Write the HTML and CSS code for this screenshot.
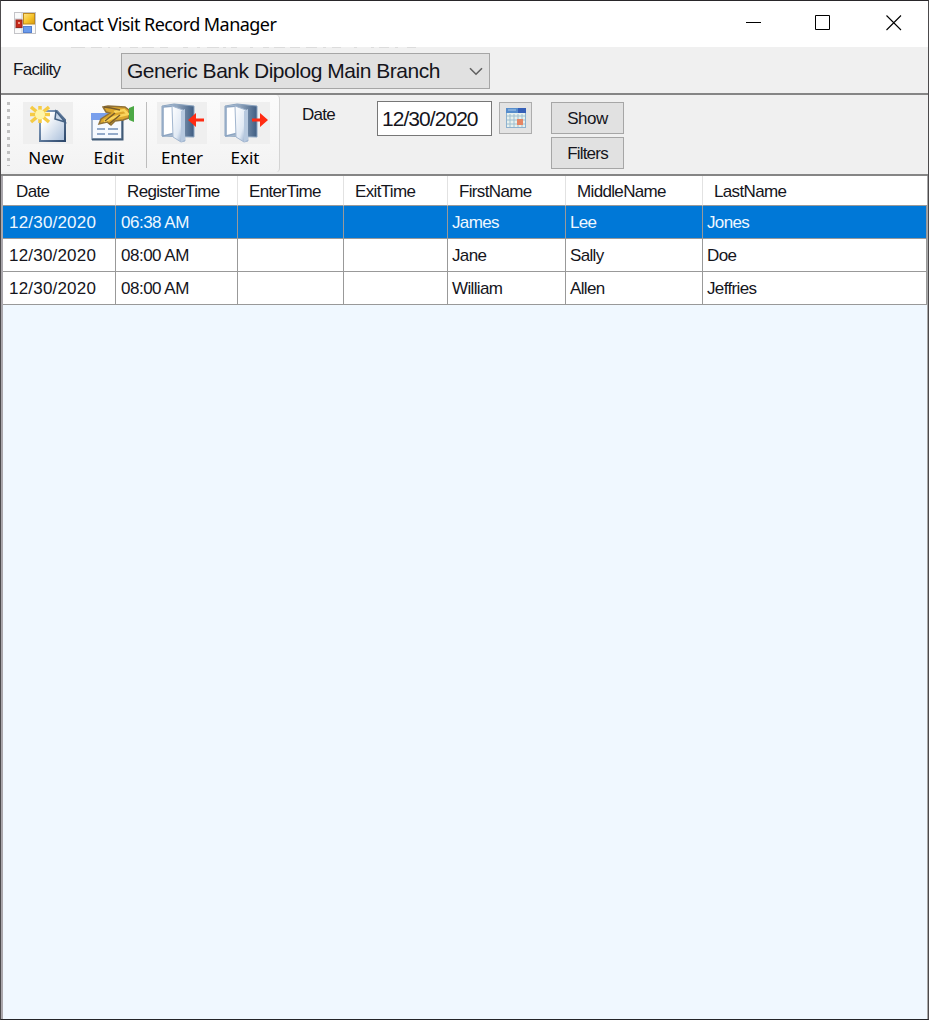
FILE: index.html
```html
<!DOCTYPE html>
<html lang="en">
<head>
<meta charset="utf-8">
<title>Contact Visit Record Manager</title>
<link rel="stylesheet" href="styles.css">
</head>
<body>
<div class="window">
  <header class="titlebar">
    <svg class="app-icon" width="22" height="22" viewBox="0 0 22 22">
      <defs><linearGradient id="gold" x2="1" y2="1"><stop stop-color="#ffe48a"/><stop offset=".5" stop-color="#f7c62f"/><stop offset="1" stop-color="#d99a08"/></linearGradient></defs>
      <rect x=".5" y=".5" width="21" height="21" fill="#fafafa" stroke="#c4c4c8"/>
      <path d="M8 1V21M1 7H8M1 16H8M17 14V21" stroke="#c9cbd0"/>
      <rect x="9.5" y="1.5" width="11" height="10.500" fill="url(#gold)" stroke="#c08a1c"/>
      <rect x="2" y="8" width="6" height="7.500" fill="#c8281a" stroke="#96271f"/>
      <path d="M4 10h2v2H4z" fill="#ef9a87"/>
      <rect x="9.500" y="14.500" width="8" height="6" fill="#6a9bec" stroke="#5580cf"/>
    </svg>
    <h1 class="title">Contact Visit Record Manager</h1>
    <svg class="win-controls" width="156" height="16" viewBox="0 0 156 16" fill="none" stroke="#000">
      <path d="M0 7.500H15M69.500 .5H83.500V14.500H69.500Z"/>
      <path d="M140.500 .5L155 15M155 .5L140.500 15" stroke-width="1.1"/>
    </svg>
  </header>

  <section class="facility">
    <svg class="shadow-marks" width="350" height="2" viewBox="0 0 350 2"><path d="M2 .5H16M22 .5H33M39 .5H41M50 .5H52M61 .5H69M73 .5H85M91 .5H99M114 .5H119M128 .5H131M138 .5H150M154 .5H157M162 .5H168M181 .5H184M194 .5H200M205 .5H216M221 .5H231M237 .5H248M254 .5H257M263 .5H272M285 .5H288M302 .5H305M310 .5H320M326 .5H329M338 .5H347" stroke="#dcdcdc"/></svg>
    <label class="label facility-label">Facility</label>
    <div class="combo">
      <span class="combo-text">Generic Bank Dipolog Main Branch</span>
      <svg width="14" height="9" viewBox="0 0 14 9"><path d="M1 1.200L7 7.200L13 1.200" fill="none" stroke="#606060" stroke-width="1.600"/></svg>
    </div>
  </section>

  <section class="toolbar">
    <div class="toolstrip">
      <i class="grip"></i>
      <button class="tool tool-new">
        <svg class="tool-icon" width="50" height="42" viewBox="0 0 50 42">
          <defs>
            <linearGradient id="page" x2="1" y2="1"><stop offset=".25" stop-color="#fff"/><stop offset="1" stop-color="#a9bfdb"/></linearGradient>
            <linearGradient id="edge" x2="1" y2="1"><stop stop-color="#8fa9c9"/><stop offset="1" stop-color="#2d486b"/></linearGradient>
          </defs>
          <path d="M18 9H34L42 18V39H17V10Z" fill="url(#page)" stroke="url(#edge)" stroke-width="2"/>
          <path d="M33 9L32 17L42 20Z" fill="#c7d6e8" stroke="#456284" stroke-width="1.500"/>
          <path d="M17 4V21M7 12.500H27M8 5L26 20M26 5L8 20" stroke="#f5cb45" stroke-width="3.500"/>
          <circle cx="17" cy="12.500" r="5" fill="#fff5a8"/>
        </svg>
        <span>New</span>
      </button>
      <button class="tool tool-edit">
        <svg class="tool-icon plain" width="50" height="42" viewBox="0 0 50 42">
          <rect x="6" y="12" width="30" height="25" fill="#f6f9fe" stroke="#a5b4c8" stroke-width="2"/>
          <path d="M6 37.500H36.500V13" fill="none" stroke="#415a76" stroke-width="2"/>
          <rect x="5" y="11" width="30" height="7" fill="#799fec"/>
          <path d="M11 27H19M22 27H32M11 32H19M22 32H32" stroke="#93aaca" stroke-width="2"/>
          <path d="M17 5L22 4L39 5L43 8V16L37 18L29 19L25 23L21 20L13 22L15 17L24 11L20 10Z" fill="#dca72d" stroke="#8f7138" stroke-width="1.500"/>
          <path d="M28 10L38 8L42 12L29 15L18 19" fill="none" stroke="#fad55d" stroke-width="2.500"/>
          <path d="M18 5L25 6L34 8M19 19L29 11M23 22L34 13" fill="none" stroke="#765b2c" stroke-width="1.500"/>
          <path d="M43 6L48 4V20L43 18Z" fill="#4ca845"/>
        </svg>
        <span>Edit</span>
      </button>
      <i class="separator"></i>
      <button class="tool tool-enter">
        <svg class="tool-icon" width="50" height="42" viewBox="0 0 50 42">
          <defs>
            <linearGradient id="back" x2="1"><stop stop-color="#dbe6f2"/><stop offset="1" stop-color="#3f5d82"/></linearGradient>
            <linearGradient id="door" x2="1" y2="1"><stop stop-color="#fff"/><stop offset=".6" stop-color="#e0e9f4"/><stop offset="1" stop-color="#7895bc"/></linearGradient>
          </defs>
          <path d="M5 4L17 2L37 4V35L5 34Z" fill="url(#back)" stroke="#8aa3bf"/>
          <path d="M6 5L18 4V31L6 34Z" fill="#fff" stroke="#8ca4c1" stroke-width="1.500"/>
          <path d="M15 4L26 8L28 39L24 40L16 35Z" fill="url(#door)" stroke="#a2b6cf"/>
          <path d="M24 9L28 7V38L24 40Z" fill="#b7c9df"/>
          <path d="M31 18L39 11V16.500H47V19.500H39V25Z" fill="#ff2b12"/>
        </svg>
        <span>Enter</span>
      </button>
      <button class="tool tool-exit">
        <svg class="tool-icon" width="50" height="42" viewBox="0 0 50 42">
          <path d="M5 4L17 2L37 4V35L5 34Z" fill="url(#back)" stroke="#8aa3bf"/>
          <path d="M6 5L18 4V31L6 34Z" fill="#fff" stroke="#8ca4c1" stroke-width="1.500"/>
          <path d="M15 4L26 8L28 39L24 40L16 35Z" fill="url(#door)" stroke="#a2b6cf"/>
          <path d="M24 9L28 7V38L24 40Z" fill="#b7c9df"/>
          <path d="M48 18L40 11V16.500H32V19.500H40V25Z" fill="#ff2b12"/>
        </svg>
        <span>Exit</span>
      </button>
    </div>
    <label class="label date-label">Date</label>
    <div class="date-field"><span>12/30/2020</span></div>
    <button class="calendar">
      <svg width="20" height="20" viewBox="0 0 20 20">
        <rect x=".5" y="2" width="19" height="17.500" fill="#e7f0ed" stroke="#8db1cf"/>
        <path d="M0 0H20V5H0Z" fill="#568dcc"/><path d="M12 0H20V5H12Z" fill="#365fb7"/>
        <path d="M2 2H10" stroke="#a9c8e9"/>
        <path d="M4 6V19M8 6V19M12 6V19M16 6V19M1 8H19M1 12H19M1 16H19" stroke="#9ebfd0"/>
        <rect x="11" y="11" width="6" height="6" fill="#e58563"/>
      </svg>
    </button>
    <div class="actions">
      <button class="action show">Show</button>
      <button class="action filters">Filters</button>
    </div>
  </section>

  <main class="grid-area">
    <table class="records">
      <colgroup><col class="c1"><col class="c2"><col class="c3"><col class="c4"><col class="c5"><col class="c6"><col class="c7"></colgroup>
      <thead><tr><th>Date</th><th>RegisterTime</th><th>EnterTime</th><th>ExitTime</th><th>FirstName</th><th>MiddleName</th><th>LastName</th></tr></thead>
      <tbody>
        <tr class="selected"><td class="num">12/30/2020</td><td class="time">06:38 AM</td><td></td><td></td><td>James</td><td>Lee</td><td>Jones</td></tr>
        <tr><td class="num">12/30/2020</td><td class="time">08:00 AM</td><td></td><td></td><td>Jane</td><td>Sally</td><td>Doe</td></tr>
        <tr><td class="num">12/30/2020</td><td class="time">08:00 AM</td><td></td><td></td><td>William</td><td>Allen</td><td>Jeffries</td></tr>
      </tbody>
    </table>
  </main>
</div>
</body>
</html>
```

FILE: styles.css
```css
* { box-sizing: border-box; }
body { margin: 0; background: #fff; color: #15151c; font: 17px/20px "Liberation Sans", Arial, sans-serif; }
button { margin: 0; padding: 0; color: inherit; font: inherit; }
svg { display: block; flex: none; }
.window { display: flex; flex-direction: column; width: 929px; height: 1020px; border: 1px solid #4c4a4c; border-top-color: #29272a; border-bottom-color: #242529; background: #f0f0f0; overflow: hidden; }
.titlebar { display: flex; align-items: flex-start; height: 46px; flex: none; background: #fff; padding: 11px 26px 0 13px; }
.title { margin: 0 auto 0 6px; color: #000; font: 400 18px/24px "Noto Sans", sans-serif; letter-spacing: -.55px; white-space: nowrap; }
.win-controls { margin-top: 3px; }

.facility { display: flex; align-items: flex-start; position: relative; height: 48px; flex: none; padding: 6px 0 0 12px; border-bottom: 2px solid #858585; }
.shadow-marks { position: absolute; left: 68px; top: 0; }
.label { white-space: nowrap; letter-spacing: -.7px; }
.facility-label { width: 108px; padding-top: 7px; letter-spacing: -.7px; }
.combo { display: flex; align-items: center; justify-content: space-between; width: 369px; height: 36px; padding: 0 6px 0 5px; border: 1px solid #a6a6a6; background: #e1e1e1; }
.combo-text { font-size: 21px; line-height: 28px; letter-spacing: -.47px; white-space: nowrap; }

.toolbar { display: flex; align-items: flex-start; height: 81px; flex: none; border-bottom: 2px solid #858585; }
.toolstrip { display: flex; align-items: flex-start; width: 279px; height: 77px; padding: 7px 0 0 6px; border-right: 1px solid #d4d4d4; border-radius: 0 4px 4px 0; background: linear-gradient(#fbfbfb, #f3f3f3); }
.grip { width: 3px; height: 64px; margin-right: 13px; background: repeating-linear-gradient(#c1c1c1 0 3px, transparent 3px 7px); }
.tool { display: flex; flex-direction: column; align-items: center; width: 50px; border: 0; background: none; color: #000; font: 17px/22px "Noto Sans", sans-serif; white-space: nowrap; }
.tool-icon { background: #efefef; }
.tool-icon.plain { background: none; }
.tool span { margin-top: 3px; }
.tool-new { margin-right: 13px; }
.tool-new span { letter-spacing: 0; margin-left: -4px; }
.tool-edit span { letter-spacing: .1px; margin-left: -4px; }
.separator { width: 1px; height: 66px; margin: 0 10px; background: #bdbdbd; }
.tool-enter { margin-right: 13px; }
.tool-enter span { letter-spacing: -.15px; }
.date-label { width: 75px; margin-left: 22px; padding-top: 10px; }
.date-field { width: 115px; height: 35px; margin-top: 6px; padding: 3px 4px; border: 1px solid #777; background: #fff; font-size: 21px; line-height: 27px; letter-spacing: -.95px; white-space: nowrap; }
.calendar { display: flex; align-items: center; justify-content: center; width: 33px; height: 32px; margin: 7px 0 0 7px; border: 1px solid #adadad; background: #e3e3e3; }
.actions { display: flex; flex-direction: column; gap: 3px; margin: 7px 0 0 19px; }
.action { width: 73px; height: 32px; padding-top: 1px; border: 1px solid #a6a6a6; background: #e1e1e1; letter-spacing: -.8px; white-space: nowrap; }
.show { letter-spacing: -.5px; }

.grid-area { flex: 1; margin: 0; border-left: 2px solid #aaa7ac; border-right: 1px solid #a8a8a8; background: linear-gradient(#fff 0 30px, #f0f8ff 30px); }
.records { width: 924px; table-layout: fixed; border-collapse: separate; border-spacing: 0; background: #fff; }
.c1 { width: 113px; } .c2 { width: 122px; } .c3 { width: 106px; } .c4 { width: 104px; } .c5 { width: 118px; } .c6 { width: 137px; } .c7 { width: 224px; }
.records th { height: 30px; padding: 2px 0 0 13px; border-right: 1px solid #e2e2e2; border-bottom: 1px solid #999; text-align: left; font-weight: 400; letter-spacing: -.65px; white-space: nowrap; }
.records th:nth-child(n+2) { padding-left: 11px; }
.records th:last-child { border-right: 0; }
.records td { height: 33px; padding: 1px 0 0 4px; border-right: 1px solid #999; border-bottom: 1px solid #999; letter-spacing: -.65px; white-space: nowrap; }
.records .num { padding-left: 6px; letter-spacing: .2px; }
.records .time { padding-left: 5px; letter-spacing: -.5px; }
.selected { color: #eef7ff; background: #0078d7; }
```
